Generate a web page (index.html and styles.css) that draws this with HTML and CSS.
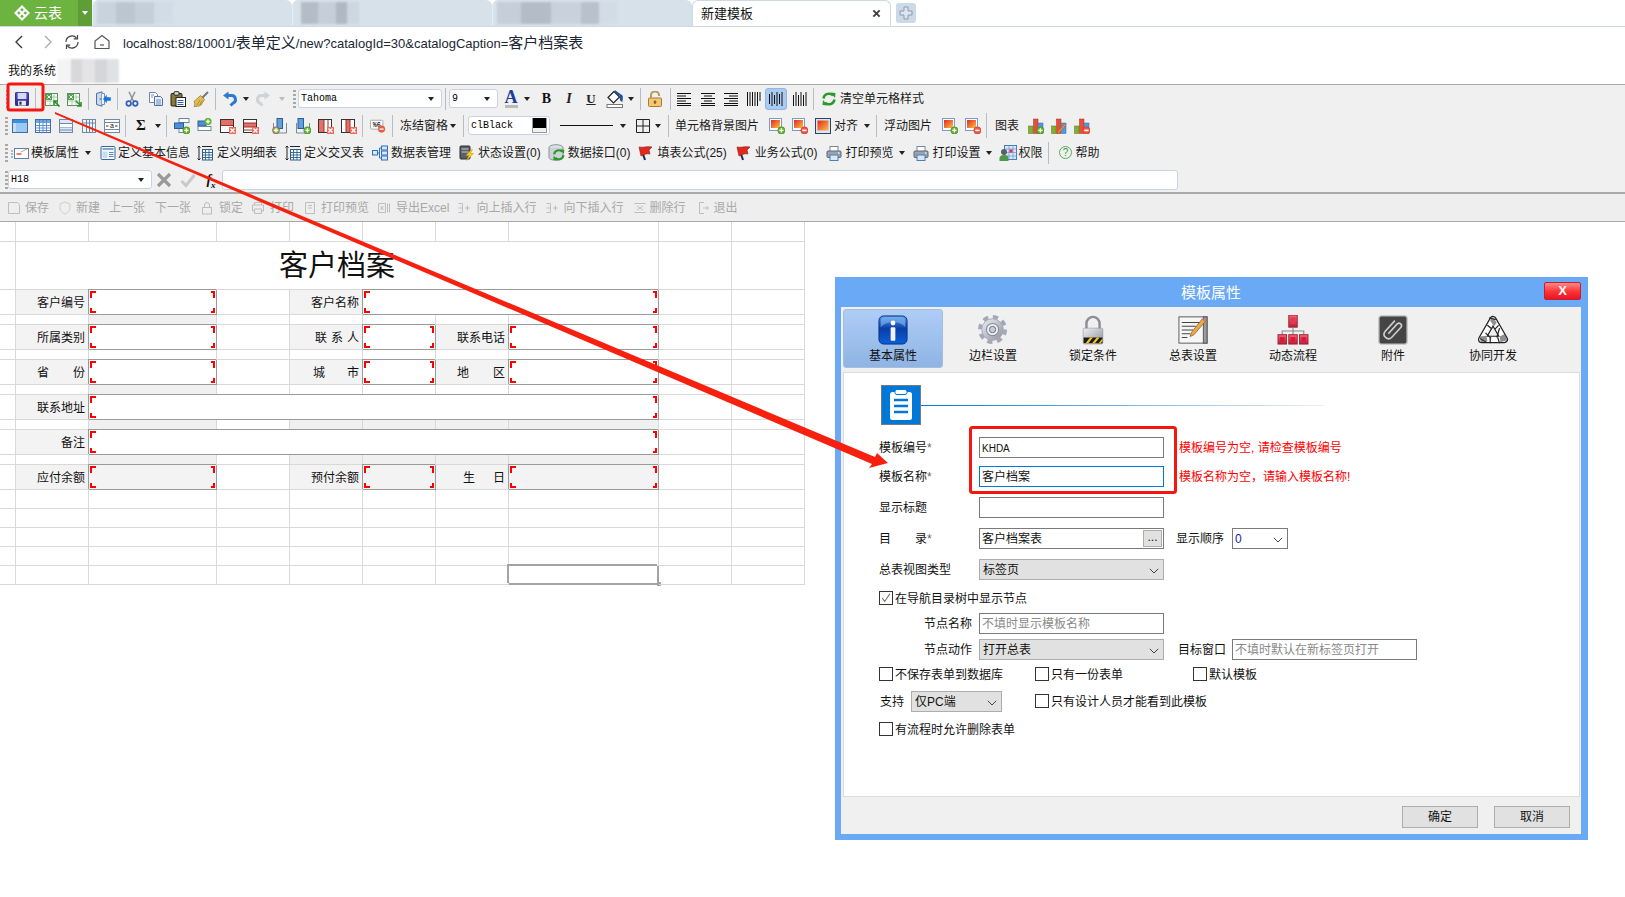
FILE: index.html
```html
<!DOCTYPE html>
<html lang="zh-CN">
<head>
<meta charset="utf-8">
<title>新建模板</title>
<link rel="stylesheet" href="styles.css">
</head>
<body>
<svg class="defs" aria-hidden="true">
<defs>
<linearGradient id="gsave" x1="0" y1="0" x2="0" y2="1"><stop offset="0" stop-color="#4a4fd0"/><stop offset="1" stop-color="#2a2a90"/></linearGradient>
<linearGradient id="gimg" x1="0" y1="0" x2="1" y2="1"><stop offset="0" stop-color="#e5281e"/><stop offset="1" stop-color="#fbc04a"/></linearGradient>
<linearGradient id="ginfo" x1="0" y1="0" x2="0" y2="1"><stop offset="0" stop-color="#4f9be8"/><stop offset=".45" stop-color="#0a3fa8"/><stop offset="1" stop-color="#0a5fd8"/></linearGradient>
<linearGradient id="gsilver" x1="0" y1="0" x2="1" y2="1"><stop offset="0" stop-color="#eef0f4"/><stop offset="1" stop-color="#8d9098"/></linearGradient>
<linearGradient id="gred" x1="0" y1="0" x2="0" y2="1"><stop offset="0" stop-color="#ee6a7c"/><stop offset="1" stop-color="#b8203a"/></linearGradient>
<g id="plus"><circle cx="12.4" cy="12.4" r="3.6" fill="#62b52e" stroke="#3f8a1a" stroke-width=".6"/><path d="M10.3 12.4h4.2M12.4 10.3v4.2" stroke="#fff" stroke-width="1.4"/></g>
<g id="minus"><circle cx="12.4" cy="12.4" r="3.6" fill="#ee5a44" stroke="#c53a26" stroke-width=".6"/><path d="M10.3 12.4h4.2" stroke="#fff" stroke-width="1.5"/></g>
<g id="xm"><rect x="9" y="9" width="7" height="7" fill="#ee6a5a"/><path d="M10.5 10.5l4 4M14.5 10.5l-4 4" stroke="#fff" stroke-width="1.4"/></g>
<g id="imgb"><rect x=".5" y=".5" width="12" height="12" fill="#fff" stroke="#7d9ccb"/><rect x="2" y="2" width="9" height="8" fill="url(#gimg)"/></g>
<g id="bars"><rect x=".5" y="8" width="4.5" height="7.5" fill="#7fb22e" stroke="#4f7a16" stroke-width=".5"/><rect x="5.5" y="1" width="4.5" height="14.5" fill="#e5503c" stroke="#a82c1c" stroke-width=".5"/><rect x="10.5" y="5" width="4.5" height="10.5" fill="#4c9be0" stroke="#2a6aa8" stroke-width=".5"/></g>
<g id="sheet"><rect x="1.5" y="2.5" width="12" height="12" fill="#fff" stroke="#5f8f5f"/><path d="M1.5 6h12M1.5 10h12M6 2.5v12M10 2.5v12" stroke="#8fbf8f" stroke-width=".8"/><rect x="2" y="3" width="6" height="6" fill="#4ea24e"/><path d="M3.3 4.3l3.4 3.4M6.7 4.3l-3.4 3.4" stroke="#fff"/></g>
<g id="flagg"><path d="M3 3l4 12" stroke="#1c2a50" stroke-width="2"/><path d="M1 2c4 1 7-1 13 0l-3 3 1 4c-4-1-6 1-9 2z" fill="#e0291c" stroke="#8c1a10" stroke-width=".6"/></g>
<g id="prng"><rect x="4" y="1.5" width="8" height="5" fill="#fff" stroke="#7c8794"/><rect x="1" y="6" width="14" height="6.5" rx="1" fill="#9aa4ae" stroke="#5f6974"/><rect x="4" y="10" width="8" height="5.5" fill="#d8e8fa" stroke="#4c7fb8"/><circle cx="12.8" cy="8" r=".8" fill="#fff"/></g>
<g id="rc"><path d="M2.5 7.5A5.5 5.5 0 0 1 12 4.5" fill="none" stroke="#2a9a2a" stroke-width="2.4"/><path d="M9.5 1.5l5 .5-.5 5z" fill="#2a9a2a"/><path d="M13.5 8.5A5.5 5.5 0 0 1 4 11.5" fill="none" stroke="#2a9a2a" stroke-width="2.4"/><path d="M6.5 14.5l-5-.5.5-5z" fill="#2a9a2a"/></g>
<symbol id="save" viewBox="0 0 16 16"><rect x=".5" y=".5" width="15" height="15" rx="1" fill="url(#gsave)" stroke="#20206a"/><rect x="3" y="1" width="10" height="7" fill="#d6d9f4"/><rect x="3.5" y="10" width="9" height="5.5" fill="#e6e8f6"/><rect x="5" y="11" width="2.5" height="3.5" fill="#333"/></symbol>
<symbol id="xlin" viewBox="0 0 16 16"><use href="#sheet"/><path d="M15.5 15.5l-5-5M10 14v-4h4" stroke="#2f8f2f" stroke-width="1.6" fill="none"/></symbol>
<symbol id="xlout" viewBox="0 0 16 16"><use href="#sheet"/><path d="M10 10l5 5M15 11v4h-4" stroke="#2f8f2f" stroke-width="1.6" fill="none"/></symbol>
<symbol id="door" viewBox="0 0 16 16"><path d="M1.5 2.5L7 .8v14.4l-5.5-1.7z" fill="#c9daf0" stroke="#4e6f9f"/><path d="M7 2.5h2.500v11H7" fill="#eef3fa" stroke="#6e8fbf"/><circle cx="5.3" cy="8" r=".8" fill="#3c5c8c"/><path d="M15.8 6.300h-4V3.800L8 8l3.800 4.200V9.700h4z" fill="#1477e0"/></symbol>
<symbol id="cut" viewBox="0 0 16 16"><path d="M5 .8l4.500 9.500M11 .8L6.500 10.300" stroke="#8c93a0" stroke-width="1.500"/><circle cx="4.700" cy="12.500" r="2.300" fill="none" stroke="#2f5fb8" stroke-width="1.700"/><circle cx="11.300" cy="12.500" r="2.300" fill="none" stroke="#2f5fb8" stroke-width="1.700"/></symbol>
<symbol id="copy" viewBox="0 0 16 16"><path d="M1.500 1.500h6l2 2v8h-8z" fill="#fff" stroke="#6f86b0"/><path d="M6.500 5.500h6l2 2v7h-8z" fill="#e8f0fb" stroke="#4e6fa8"/><path d="M8 9h5M8 11h5M8 13h5M3 4h3M3 6h2" stroke="#4e6fa8" stroke-width=".8"/></symbol>
<symbol id="paste" viewBox="0 0 16 16"><rect x="1" y="2.500" width="11" height="12.500" rx="1" fill="#8a7a34" stroke="#222"/><rect x="4" y=".7" width="5" height="3.500" rx="1" fill="#ddd" stroke="#222"/><rect x="6" y="6.500" width="9.500" height="9" fill="#fff" stroke="#222"/><path d="M7.500 9.500h6M7.500 11.500h6M7.500 13.500h6" stroke="#2f5fb8"/></symbol>
<symbol id="brush" viewBox="0 0 16 16"><path d="M15 1L9 7" stroke="#6f7780" stroke-width="2"/><path d="M7.500 4.500l4 4-3.500 5.500c-2 1.500-5 1.500-7 1.500 1-1 .7-2 .8-3.500L1 10.500z" fill="#e0bd5a" stroke="#9a7b26" stroke-width=".8"/><path d="M4 14l3-5M6.500 14.500l2.500-5" stroke="#9a7b26" stroke-width=".7"/></symbol>
<symbol id="undo" viewBox="0 0 16 16"><path d="M5 4.500h4.500a4 4 0 0 1 1.500 7.700L8.500 14.500" fill="none" stroke="#2f78d0" stroke-width="3"/><path d="M6.500 .5v8L1 4.500z" fill="#2f78d0"/></symbol>
<symbol id="redo" viewBox="0 0 16 16"><path d="M11 4.500H6.500a4 4 0 0 0-1.500 7.700l2.500 2.300" fill="none" stroke="#cfd3d8" stroke-width="3"/><path d="M9.500 .5v8L15 4.500z" fill="#cfd3d8"/></symbol>
<symbol id="fill" viewBox="0 0 18 18"><rect x="1" y="14.500" width="15.500" height="3" fill="#fff" stroke="#777"/><path d="M8 1.500l-6 6 5.500 5.500 6-6z" fill="#fff" stroke="#222" stroke-width="1.200"/><path d="M8.500 1l7 5v4" fill="none" stroke="#1c4fa0" stroke-width="2"/><path d="M13 6l3.500 0 0 6-2-1z" fill="#1c4fa0"/></symbol>
<symbol id="lockopen" viewBox="0 0 16 16"><rect x="1.500" y="7" width="13" height="8.500" rx="1" fill="#f0c878" stroke="#b0782a"/><path d="M4 7V4a4 3.500 0 0 1 8 0v1" fill="none" stroke="#b89a5a" stroke-width="2"/><path d="M8 9.500v3.500M6.500 11h3" stroke="#704a14" stroke-width="1.200"/></symbol>
<symbol id="al" viewBox="0 0 16 16"><path d="M1 2.500h14M1 5h9M1 7.500h14M1 10h9M1 12.500h14M1 14.500h14" stroke="#111"/></symbol>
<symbol id="ac" viewBox="0 0 16 16"><path d="M1 2.500h14M4 5h8M1 7.500h14M4 10h8M1 12.500h14M1 14.500h14" stroke="#111"/></symbol>
<symbol id="ar" viewBox="0 0 16 16"><path d="M1 2.500h14M6 5h9M1 7.500h14M6 10h9M1 12.500h14M1 14.500h14" stroke="#111"/></symbol>
<symbol id="vb1" viewBox="0 0 16 16"><path d="M1.500 1v14M4 1v14M6.500 1v14M9 1v14M11.500 1v14M14 1v9" stroke="#111"/></symbol>
<symbol id="vb2" viewBox="0 0 16 16"><path d="M1.500 3v10M4 1v14M6.500 4v9M9 1v14M11.500 3v10M14 1v14" stroke="#111"/></symbol>
<symbol id="vb3" viewBox="0 0 16 16"><path d="M1.500 4v11M4 1v14M6.500 4v11M9 1v14M11.500 4v11M14 1v14" stroke="#111"/></symbol>
<symbol id="tb1" viewBox="0 0 16 16"><rect x=".5" y="1.500" width="15" height="13" fill="#9cc8f4" stroke="#3f6fa8"/><rect x="1" y="2" width="14" height="3" fill="#3f8fe0"/><rect x="1" y="5" width="3" height="9" fill="#bfe0fa"/></symbol>
<symbol id="tb2" viewBox="0 0 16 16"><rect x=".5" y="1.500" width="15" height="13" fill="#fff" stroke="#3f6fa8"/><rect x="1" y="2" width="14" height="3" fill="#6fa8e0"/><path d="M1 7.500h14M1 10h14M1 12.500h14M4.500 2v12M8 2v12M11.500 2v12" stroke="#3f7fc8" stroke-width=".8"/></symbol>
<symbol id="tb3" viewBox="0 0 16 16"><rect x="1.500" y="1.500" width="13" height="13" fill="#dce8f6" stroke="#6f8aa8"/><path d="M2 5.500h12M2 9h12M2 12h12" stroke="#6f8aa8"/><path d="M2 6h12v3H2z" fill="#fff"/></symbol>
<symbol id="tb4" viewBox="0 0 16 16"><rect x="1.500" y="1.500" width="13" height="13" fill="#eef3f9" stroke="#6f8aa8"/><path d="M5.500 2v12M8.500 2v12M11.500 2v12M2 5h12" stroke="#6f8aa8"/></symbol>
<symbol id="tb5" viewBox="0 0 16 16"><rect x=".5" y="1.500" width="15" height="13" fill="#fff" stroke="#6f8aa8"/><path d="M1 4.500h14M1 11.500h14" stroke="#6f8aa8"/><path d="M2 8h2.500M13.500 8H11" stroke="#333"/><text x="8" y="10.300" text-anchor="middle" font-size="7" font-family="Liberation Sans" fill="#111">a</text></symbol>
<symbol id="ins1" viewBox="0 0 16 16"><rect x="5" y=".5" width="10" height="4" fill="#fff" stroke="#6f8aa8"/><rect x="5" y="10.500" width="7" height="4" fill="#fff" stroke="#6f8aa8"/><rect x=".5" y="5" width="9" height="5.500" fill="#4c8fd8" stroke="#2a5f9f"/><use href="#plus"/></symbol>
<symbol id="ins2" viewBox="0 0 16 16"><rect x="1" y="3" width="8" height="5" fill="#4c8fd8" stroke="#2a5f9f"/><rect x="1" y="8.500" width="13" height="4" fill="#fff" stroke="#6f8aa8"/><g transform="translate(-3,-7.500)"><circle cx="14" cy="11" r="3.600" fill="#62b52e"/><path d="M12 11h4M14 9v4" stroke="#fff" stroke-width="1.400"/></g></symbol>
<symbol id="del1" viewBox="0 0 16 16"><rect x=".5" y="1.500" width="13" height="13" fill="#fff" stroke="#333"/><rect x="1" y="2" width="12" height="5" fill="#e07068"/><path d="M1 7.500h12" stroke="#a03028"/><use href="#xm"/></symbol>
<symbol id="del2" viewBox="0 0 16 16"><rect x=".5" y="1.500" width="13" height="13" fill="#fff" stroke="#333"/><rect x="1" y="5" width="12" height="4" fill="#e07068"/><path d="M1 5h12M1 9h12M1 12h12" stroke="#a03028"/><use href="#xm"/></symbol>
<symbol id="insc1" viewBox="0 0 16 16"><rect x="5" y=".5" width="5.500" height="10" fill="#5f9fe0" stroke="#2a5f9f"/><path d="M1.500 5v10h13V5" fill="none" stroke="#7d8a9a"/><circle cx="4" cy="12.300" r="3.500" fill="#8cc63f" stroke="#a020a0" stroke-width=".6"/><path d="M2 12.300h4M4 10.300v4" stroke="#fff" stroke-width="1.300"/></symbol>
<symbol id="insc2" viewBox="0 0 16 16"><rect x="3" y=".5" width="5.500" height="10" fill="#5f9fe0" stroke="#2a5f9f"/><path d="M1.500 5v10h13V5" fill="none" stroke="#7d8a9a"/><use href="#plus"/></symbol>
<symbol id="delc1" viewBox="0 0 16 16"><rect x=".5" y="1.500" width="13" height="13" fill="#fff" stroke="#333"/><rect x="1" y="2" width="5" height="12" fill="#e07068"/><path d="M6 2v12M10 2v12" stroke="#a03028"/><use href="#xm"/></symbol>
<symbol id="delc2" viewBox="0 0 16 16"><rect x=".5" y="1.500" width="13" height="13" fill="#fff" stroke="#333"/><rect x="5" y="2" width="4" height="12" fill="#e07068"/><path d="M5 2v12M9 2v12" stroke="#a03028"/><use href="#xm"/></symbol>
<symbol id="pct" viewBox="0 0 18 16"><rect x=".5" y="1.500" width="14" height="10" rx="1" fill="#fff" stroke="#9aa4ae"/><text x="7.500" y="9.300" text-anchor="middle" font-size="7.500" font-weight="700" font-family="Liberation Mono" fill="#222">%6</text><circle cx="13" cy="11.500" r="4" fill="#ee5a44"/><path d="M10.700 11.500h4.600" stroke="#fff" stroke-width="1.500"/></symbol>
<symbol id="cells" viewBox="0 0 14 14"><path d="M.5.500h13v13H.5zM7 .5v13M.5 7h13" fill="none" stroke="#222"/></symbol>
<symbol id="imgp" viewBox="0 0 16 16"><use href="#imgb"/><use href="#plus"/></symbol>
<symbol id="imgm" viewBox="0 0 16 16"><use href="#imgb"/><use href="#minus"/></symbol>
<symbol id="imgf" viewBox="0 0 16 16"><rect x=".5" y=".5" width="15" height="15" fill="#dbe4f0" stroke="#26466f"/><rect x="2.500" y="2.500" width="11" height="10" fill="url(#gimg)"/></symbol>
<symbol id="chp" viewBox="0 0 16 16"><use href="#bars"/><use href="#plus"/></symbol>
<symbol id="chm" viewBox="0 0 16 16"><use href="#bars"/><use href="#minus"/></symbol>
<symbol id="che" viewBox="0 0 16 16"><use href="#bars"/><path d="M15 7l-7 8-2 .8.800-2 7-8z" fill="#f0a040" stroke="#a05a10" stroke-width=".6"/><path d="M13.800 5.800l1.200 1.200" stroke="#e85a9a" stroke-width="1.600"/></symbol>
<symbol id="card" viewBox="0 0 18 16"><path d="M0 6h2M0 9h2M0 12h2" stroke="#5a7fb0"/><rect x="3.500" y="3.500" width="14" height="10" fill="#fff" stroke="#5a7fb0"/><path d="M5.500 9h5" stroke="#d83a2a" stroke-width="1.300"/><path d="M10 7l6-3" stroke="#c8a060"/></symbol>
<symbol id="form" viewBox="0 0 16 16"><rect x="1" y="1.500" width="14" height="13" rx="1" fill="#f6f9fd" stroke="#34689f"/><rect x="2.500" y="3" width="11" height="2" fill="#7fa8d4"/><rect x="2.500" y="6.500" width="5" height="6.500" fill="#c8daee"/><path d="M9 7.500h4.500M9 9.500h4.500M9 11.500h4.500" stroke="#34689f" stroke-width=".8"/></symbol>
<symbol id="dtl" viewBox="0 0 16 16"><path d="M2 1v14M.5 2.500L2 1l1.500 1.500M.5 13.500L2 15l1.500-1.500" fill="none" stroke="#222"/><path d="M5 1.500h10" stroke="#222"/><rect x="5.500" y="4.500" width="10" height="10.500" fill="#fff" stroke="#2a5f90"/><path d="M5.500 7.500h10M5.500 10h10M5.500 12.500h10M8.500 4.500V15M12 4.500V15" stroke="#2a5f90" stroke-width=".9"/></symbol>
<symbol id="dbt" viewBox="0 0 16 16"><rect x=".5" y="5.500" width="5" height="4.500" fill="#d8e8fa" stroke="#2f6fc0"/><rect x="9.500" y="1" width="6" height="4" fill="#d8e8fa" stroke="#2f6fc0"/><rect x="9.500" y="6" width="6" height="4" fill="#d8e8fa" stroke="#2f6fc0"/><rect x="9.500" y="11" width="6" height="4" fill="#d8e8fa" stroke="#2f6fc0"/><path d="M5.500 8h2M7.500 3v10h2M7.500 3h2" fill="none" stroke="#2f6fc0"/></symbol>
<symbol id="stat" viewBox="0 0 16 16"><rect x="1" y="1" width="10" height="13" rx="1" fill="#5a5f66" stroke="#2a2d33"/><path d="M2.500 4h7M2.500 7h7" stroke="#c8ccd2"/><path d="M12.500 4.500L7 10.500h3L7.500 15.500l7-7h-3.200l2.200-4z" fill="#f8d020" stroke="#c89a10" stroke-width=".5"/></symbol>
<symbol id="dbi" viewBox="0 0 18 18"><ellipse cx="8" cy="3.500" rx="7" ry="2.800" fill="#dfe3e8" stroke="#8a929c"/><path d="M1 3.500v10c0 1.600 3 2.800 7 2.800s7-1.200 7-2.800v-10" fill="#cdd2d8" stroke="#8a929c"/><g transform="translate(4,4) scale(.85)"><use href="#rc"/></g></symbol>
<symbol id="flag" viewBox="0 0 16 16"><use href="#flagg"/></symbol>
<symbol id="prn" viewBox="0 0 16 16"><use href="#prng"/></symbol>
<symbol id="auth" viewBox="0 0 18 18"><rect x="5.500" y="1.500" width="12" height="14" fill="#dbe8f8" stroke="#4a78b8"/><path d="M5.500 5h12M5.500 8.500h12M5.500 12h12M10 1.500v14M14 1.500v14" stroke="#6f9ad8" stroke-width=".8"/><rect x="10.500" y="5.500" width="3" height="3" fill="#e03a2a"/><circle cx="5" cy="8" r="3" fill="#5a6068"/><path d="M.5 17v-3c0-2 2-3 4.500-3s4.500 1 4.500 3v3z" fill="#4a9a4a"/></symbol>
<symbol id="rcs" viewBox="0 0 16 16"><use href="#rc"/></symbol>
<symbol id="xg" viewBox="0 0 16 16"><path d="M2 2l12 12M14 2L2 14" stroke="#9a9a9a" stroke-width="3.200"/></symbol>
<symbol id="vg" viewBox="0 0 16 16"><path d="M1.500 9l4.500 4.500L14.500 3" fill="none" stroke="#c8c8c8" stroke-width="3"/></symbol>
<symbol id="g-save" viewBox="0 0 14 14"><path d="M1.500 1.500h9l2 2v9h-11z" fill="none" stroke="#bdbdbd"/></symbol>
<symbol id="g-new" viewBox="0 0 14 14"><path d="M7 1l5 2v4c0 3-2.500 5-5 6-2.500-1-5-3-5-6V3z" fill="none" stroke="#cfcfcf"/></symbol>
<symbol id="g-lock" viewBox="0 0 14 14"><rect x="2.500" y="6.500" width="9" height="6.500" fill="none" stroke="#bdbdbd"/><path d="M4.500 6.500V4a2.500 2.500 0 0 1 5 0v2.500" fill="none" stroke="#bdbdbd"/></symbol>
<symbol id="g-print" viewBox="0 0 14 14"><path d="M3.500 4V1.500h7V4M3.500 10H1.500V4h11v6h-2M3.500 8h7v4.500h-7z" fill="none" stroke="#bdbdbd"/></symbol>
<symbol id="g-prev" viewBox="0 0 14 14"><path d="M2.500 1.500h9v11h-9zM5 4.500h4M5 7h4" fill="none" stroke="#bdbdbd"/></symbol>
<symbol id="g-xl" viewBox="0 0 14 14"><path d="M1.500 2.500h7v9h-7zM10.500 2.500v9M12.500 2.500v9M3.500 5l3 4M6.500 5l-3 4" fill="none" stroke="#bdbdbd"/></symbol>
<symbol id="g-up" viewBox="0 0 14 14"><path d="M1.500 2.500h4M1.500 7h4M1.500 11.500h4M5.500 2.500v9M8 7h5M10.500 4.500v5" fill="none" stroke="#bdbdbd"/></symbol>
<symbol id="g-del" viewBox="0 0 14 14"><path d="M1.500 2.500h11M1.500 11.500h11M4 5l6 4M10 5L4 9" fill="none" stroke="#bdbdbd"/></symbol>
<symbol id="g-exit" viewBox="0 0 14 14"><path d="M8 1.500H3.500v11H8M7 7h5M10.500 5l2 2-2 2" fill="none" stroke="#bdbdbd"/></symbol>
<symbol id="chev" viewBox="0 0 10 6"><path d="M.8.8L5 5 9.200.8" fill="none" stroke="#444" stroke-width="1"/></symbol>
<symbol id="d-info" viewBox="0 0 32 32"><rect x="1" y="1" width="30" height="30" rx="5" fill="url(#ginfo)" stroke="#0a2f80"/><path d="M3 13C8 6 24 6 29 13V6a4 4 0 0 0-4-4H7a4 4 0 0 0-4 4z" fill="#8fc0f4" opacity=".55"/><circle cx="16" cy="8.500" r="2.600" fill="#fff"/><rect x="13.500" y="13" width="5" height="14.500" rx="1" fill="#f2f2f6"/></symbol>
<symbol id="d-gear" viewBox="0 0 32 32"><circle cx="15.500" cy="15.500" r="13" fill="none" stroke="#a4a6bc" stroke-width="5" stroke-dasharray="5.400 4.800"/><circle cx="15.500" cy="15.500" r="11.500" fill="url(#gsilver)" stroke="#a8aabc"/><circle cx="15.500" cy="15.500" r="6.500" fill="#eef0f6" stroke="#8a8c9c" stroke-width="1.200"/><circle cx="15.500" cy="15.500" r="3.400" fill="#c8cad4" stroke="#6a6c7c"/></symbol>
<symbol id="d-lock" viewBox="0 0 32 32"><path d="M9 15V9a7 7 0 0 1 14 0v6" fill="none" stroke="#8c8e94" stroke-width="2.600"/><rect x="5.500" y="14" width="21" height="17" rx="1.500" fill="url(#gsilver)" stroke="#8c8e94" stroke-width=".6"/><path d="M6 24h20v6H6z" fill="#1a1a1a"/><path d="M8 30l5-6h3l-5 6zM15 30l5-6h3l-5 6zM22 30l4-5v3l-2 2z" fill="#f2c81e"/></symbol>
<symbol id="d-note" viewBox="0 0 32 32"><rect x="1" y="2" width="30" height="28" fill="#f6f6f6" stroke="#555"/><rect x="27" y="2" width="4" height="28" fill="#9a9a9a" stroke="#555"/><path d="M4 8h20M4 12h15M4 16h12M4 20h9M4 24h6" stroke="#444" stroke-width="1.200"/><path d="M26 4l3 3-12 14-4 2 1-4z" fill="#f0a848" stroke="#8a5a20" stroke-width=".8"/><path d="M26 4l3 3 1-3z" fill="#e86a9a"/></symbol>
<symbol id="d-tree" viewBox="0 0 32 32"><rect x="11.500" y="0" width="9" height="13" fill="url(#gred)" stroke="#a02030"/><rect x="13.500" y="2.500" width="5" height="7" fill="#e83850"/><path d="M16 13v4M4.500 21v-4h23v4M16 17v4" fill="none" stroke="#8a8a8a" stroke-width="1.200"/><rect x="0" y="21" width="9" height="10" fill="url(#gred)" stroke="#a02030"/><rect x="11.500" y="21" width="9" height="10" fill="url(#gred)" stroke="#a02030"/><rect x="23" y="21" width="9" height="10" fill="url(#gred)" stroke="#a02030"/><rect x="2" y="23.500" width="5" height="5" fill="#e01838"/><rect x="13.500" y="23.500" width="5" height="5" fill="#e01838"/><rect x="25" y="23.500" width="5" height="5" fill="#e01838"/></symbol>
<symbol id="d-clip" viewBox="0 0 32 32"><rect x="1" y="1" width="30" height="30" rx="2.500" fill="#454545" stroke="#bdbdbd" stroke-width="1.400"/><path d="M11 21l9.500-10.500a2.700 2.700 0 0 1 4 3.600L14.500 25a4.800 4.800 0 0 1-7-6.500L18 7" transform="translate(0,-1)" fill="none" stroke="#cfcfcf" stroke-width="1.700"/></symbol>
<symbol id="d-hands" viewBox="0 0 32 32"><path d="M16 5L28 26H4z" fill="none" stroke="#222" stroke-width="8" stroke-linejoin="round"/><path d="M16 5L28 26H4z" fill="none" stroke="#fff" stroke-width="5.400" stroke-linejoin="round"/><path d="M12 3l7 2M8 19l6 6M23 14l-3 10M2 25l7 4M13 24v6M21 24l2 6M10 11l5 4M22 11l-4 4" stroke="#222" stroke-width="1.300"/><path d="M15 2l5 6-3 4-4-6zM2 23l7-1 1 6-7 1zM23 23l6-3 2 7-7 2z" fill="#444" opacity=".6"/></symbol>
</defs>
</svg>

<header class="tabbar">
  <div class="logo"><svg class="logo-ic" viewBox="0 0 16 16"><path d="M8 0l8 8-8 8-8-8z" fill="#fff"/><path d="M8 3l1.800 1.800L8 6.600 6.200 4.800zM3 8l1.800-1.800L6.600 8 4.800 9.800zM13 8l-1.800 1.800L9.400 8l1.800-1.800zM8 13l-1.800-1.800L8 9.400l1.800 1.800z" fill="#6db33f"/></svg><span>云表</span></div>
  <div class="logo-drop"><i class="caret white"></i></div>
  <div class="tab"><i class="blur b1"></i></div>
  <div class="tab"><i class="blur b2"></i></div>
  <div class="tab"><i class="blur b3"></i></div>
  <div class="tab active"><span>新建模板</span><svg class="tab-x" viewBox="0 0 10 10"><path d="M1.500 1.500l7 7M8.500 1.500l-7 7" stroke="#444" stroke-width="2.200"/></svg></div>
  <div class="newtab"><svg viewBox="0 0 14 14"><path d="M5 1h4v4h4v4H9v4H5V9H1V5h4z" fill="#dde6f0" stroke="#8b9bb0"/></svg></div>
</header>

<nav class="urlbar">
  <svg class="nav-ic back" viewBox="0 0 16 16"><path d="M11 2L5 8l6 6" fill="none" stroke="#333" stroke-width="1.300"/></svg>
  <svg class="nav-ic fwd" viewBox="0 0 16 16"><path d="M5 2l6 6-6 6" fill="none" stroke="#aaa" stroke-width="1.300"/></svg>
  <svg class="nav-ic reload" viewBox="0 0 16 16"><path d="M2 8a6 6 0 0 1 10.500-4M14 8A6 6 0 0 1 3.500 12" fill="none" stroke="#444" stroke-width="1.200"/><path d="M13.500 1v3.800H9.700M2.500 15v-3.800h3.800" fill="none" stroke="#444" stroke-width="1.200"/></svg>
  <svg class="nav-ic home" viewBox="0 0 16 16"><path d="M8 1.500L15 7v7.500H1V7z" fill="none" stroke="#555" stroke-width="1.200"/><path d="M6 11h4" stroke="#555" stroke-width="1.200"/></svg>
  <span class="url">localhost:88/10001/<span class="cjk">表单定义</span>/new?catalogId=30&amp;catalogCaption=<span class="cjk">客户档案表</span></span>
</nav>
<div class="bookmarks"><span>我的系统</span><i class="blur b4"></i></div>

<section class="tools">
  <div class="row r1">
    <span class="t w14"><i class="grip"></i></span>
    <span class="t w15"><svg class="ic14"><use href="#save"/></svg></span>
    <span class="t w13"><i class="sl"></i></span>
    <span class="t w20"><svg class="ic"><use href="#xlin"/></svg></span>
    <span class="t w24"><svg class="ic"><use href="#xlout"/></svg></span>
    <span class="t w4"><i class="sl"></i></span>
    <span class="t w26"><svg class="ic"><use href="#door"/></svg></span>
    <span class="t w2"><i class="sl"></i></span>
    <span class="t w27"><svg class="ic"><use href="#cut"/></svg></span>
    <span class="t w21"><svg class="ic"><use href="#copy"/></svg></span>
    <span class="t w23"><svg class="ic"><use href="#paste"/></svg></span>
    <span class="t w24"><svg class="ic"><use href="#brush"/></svg></span>
    <span class="t w4"><i class="sl"></i></span>
    <span class="t w26"><svg class="ic"><use href="#undo"/></svg></span>
    <span class="t w6"><i class="caret"></i></span>
    <span class="t w28"><svg class="ic"><use href="#redo"/></svg></span>
    <span class="t w9"><i class="caret off"></i></span>
    <span class="t w4"></span>
    <span class="t w8"><i class="grip"></i></span>
    <div class="combo w144"><span>Tahoma</span><i class="caret"></i></div>
    <span class="t w7"><i class="sl"></i></span>
    <div class="combo w49"><span>9</span><i class="caret"></i></div>
    <span class="t w26 fa"><b>A</b></span>
    <span class="t w6"><i class="caret"></i></span>
    <span class="t w33 fb"><b>B</b></span>
    <span class="t w12 fi"><b>I</b></span>
    <span class="t w32 fu"><b>U</b></span>
    <span class="t w16"><svg class="ic18"><use href="#fill"/></svg></span>
    <span class="t w16"><i class="caret"></i></span>
    <span class="t w2"><i class="sl"></i></span>
    <span class="t w28"><svg class="ic"><use href="#lockopen"/></svg></span>
    <span class="t w2"><i class="sl"></i></span>
    <span class="t w26"><svg class="ic"><use href="#al"/></svg></span>
    <span class="t w22"><svg class="ic"><use href="#ac"/></svg></span>
    <span class="t w24"><svg class="ic"><use href="#ar"/></svg></span>
    <span class="t w22"><svg class="ic"><use href="#vb1"/></svg></span>
    <span class="t w22 on"><svg class="ic"><use href="#vb2"/></svg></span>
    <span class="t w25"><svg class="ic"><use href="#vb3"/></svg></span>
    <span class="t w2"><i class="sl"></i></span>
    <span class="t w4"></span>
    <span class="t w22"><svg class="ic"><use href="#rcs"/></svg></span>
    <span class="lbl">清空单元格样式</span>
  </div>
  <div class="row r2 pad5">
    <i class="grip"></i>
    <span class="t w23"><svg class="ic"><use href="#tb1"/></svg></span>
    <span class="t w23"><svg class="ic"><use href="#tb2"/></svg></span>
    <span class="t w23"><svg class="ic"><use href="#tb3"/></svg></span>
    <span class="t w23"><svg class="ic"><use href="#tb4"/></svg></span>
    <span class="t w23"><svg class="ic"><use href="#tb5"/></svg></span>
    <span class="t w5"><i class="sl"></i></span>
    <span class="t w26 sig">Σ</span>
    <span class="t w8"><i class="caret"></i></span>
    <span class="t w9"><i class="sl"></i></span>
    <span class="t w22"><svg class="ic"><use href="#ins1"/></svg></span>
    <span class="t w24"><svg class="ic"><use href="#ins2"/></svg></span>
    <span class="t w22"><svg class="ic"><use href="#del1"/></svg></span>
    <span class="t w24"><svg class="ic"><use href="#del2"/></svg></span>
    <span class="t w34"><svg class="ic"><use href="#insc1"/></svg></span>
    <span class="t w12"><svg class="ic"><use href="#insc2"/></svg></span>
    <span class="t w34"><svg class="ic"><use href="#delc1"/></svg></span>
    <span class="t w12"><svg class="ic"><use href="#delc2"/></svg></span>
    <span class="t w14"><i class="sl"></i></span>
    <span class="t w18"><svg class="ic"><use href="#pct"/></svg></span>
    <span class="t w10"><i class="sl"></i></span>
    <span class="t w3"></span>
    <span class="lbl">冻结窗格</span>
    <span class="t w10"><i class="caret"></i></span>
    <span class="t w10"><i class="sl"></i></span>
    <div class="combo w82"><span>clBlack</span><i class="swatch"></i></div>
    <span class="t w10"></span>
    <span class="t w53"><i class="hline"></i></span>
    <span class="t w20"><i class="caret"></i></span>
    <span class="t w20"><svg class="ic14"><use href="#cells"/></svg></span>
    <span class="t w10"><i class="caret"></i></span>
    <span class="t w10"><i class="sl"></i></span>
    <span class="t w2"></span>
    <span class="lbl">单元格背景图片</span>
    <span class="t w35"><svg class="ic"><use href="#imgp"/></svg></span>
    <span class="t w12"><svg class="ic"><use href="#imgm"/></svg></span>
    <span class="t w6"></span>
    <span class="t w22"><svg class="ic"><use href="#imgf"/></svg></span>
    <span class="lbl">对齐</span>
    <span class="t w17"><i class="caret"></i></span>
    <span class="t w2"><i class="sl"></i></span>
    <span class="t w7"></span>
    <span class="lbl">浮动图片</span>
    <span class="t w36"><svg class="ic"><use href="#imgp"/></svg></span>
    <span class="t w10"><svg class="ic"><use href="#imgm"/></svg></span>
    <span class="t w17"><i class="sl tall"></i></span>
    <span class="lbl">图表</span>
    <span class="t w34"><svg class="ic"><use href="#chp"/></svg></span>
    <span class="t w12"><svg class="ic"><use href="#che"/></svg></span>
    <span class="t w34"><svg class="ic"><use href="#chm"/></svg></span>
  </div>
  <div class="row r3 pad5">
    <i class="grip"></i>
    <span class="t w23"><svg class="ic18"><use href="#card"/></svg></span>
    <span class="lbl">模板属性</span>
    <span class="t w18"><i class="caret"></i></span>
    <span class="t w21"><svg class="ic"><use href="#form"/></svg></span>
    <span class="lbl">定义基本信息</span>
    <span class="t w3"></span>
    <span class="t w24"><svg class="ic"><use href="#dtl"/></svg></span>
    <span class="lbl">定义明细表</span>
    <span class="t w4"></span>
    <span class="t w23"><svg class="ic"><use href="#dtl"/></svg></span>
    <span class="lbl">定义交叉表</span>
    <span class="t w4"></span>
    <span class="t w23"><svg class="ic"><use href="#dbt"/></svg></span>
    <span class="lbl">数据表管理</span>
    <span class="t w4"></span>
    <span class="t w23"><svg class="ic"><use href="#stat"/></svg></span>
    <span class="lbl">状态设置(0)</span>
    <span class="t w5"></span>
    <span class="t w22"><svg class="ic18"><use href="#dbi"/></svg></span>
    <span class="lbl">数据接口(0)</span>
    <span class="t w5"></span>
    <span class="t w22"><svg class="ic"><use href="#flag"/></svg></span>
    <span class="lbl">填表公式(25)</span>
    <span class="t w6"></span>
    <span class="t w22"><svg class="ic"><use href="#flag"/></svg></span>
    <span class="lbl">业务公式(0)</span>
    <span class="t w6"></span>
    <span class="t w22"><svg class="ic"><use href="#prn"/></svg></span>
    <span class="lbl">打印预览</span>
    <span class="t w17"><i class="caret"></i></span>
    <span class="t w22"><svg class="ic"><use href="#prn"/></svg></span>
    <span class="lbl">打印设置</span>
    <span class="t w17"><i class="caret"></i></span>
    <span class="t w21"><svg class="ic18"><use href="#auth"/></svg></span>
    <span class="lbl">权限</span>
    <span class="t w13"><i class="sl"></i></span>
    <span class="t w20 help"><i>?</i></span>
    <span class="lbl">帮助</span>
  </div>
  <div class="row r4 pad5">
    <i class="grip"></i>
    <div class="combo w144"><span>H18</span><i class="caret"></i></div>
    <span class="t w24"><svg class="ic"><use href="#xg"/></svg></span>
    <span class="t w24"><svg class="ic"><use href="#vg"/></svg></span>
    <span class="t w22 fx"><span>f<sub>x</sub></span></span>
    <div class="formula"></div>
  </div>
</section>

<section class="actions">
  <span class="t w15"><svg class="ic14"><use href="#g-save"/></svg></span><span class="t w4"></span><span class="lbl">保存</span>
  <span class="t w8"></span><span class="t w16"><svg class="ic14"><use href="#g-new"/></svg></span><span class="t w3"></span><span class="lbl">新建</span>
  <span class="t w9"></span><span class="lbl">上一张</span>
  <span class="t w10"></span><span class="lbl">下一张</span>
  <span class="t w8"></span><span class="t w16"><svg class="ic14"><use href="#g-lock"/></svg></span><span class="t w4"></span><span class="lbl">锁定</span>
  <span class="t w7"></span><span class="t w16"><svg class="ic14"><use href="#g-print"/></svg></span><span class="t w4"></span><span class="lbl">打印</span>
  <span class="t w8"></span><span class="t w16"><svg class="ic14"><use href="#g-prev"/></svg></span><span class="t w3"></span><span class="lbl">打印预览</span>
  <span class="t w7"></span><span class="t w16"><svg class="ic14"><use href="#g-xl"/></svg></span><span class="t w4"></span><span class="lbl">导出Excel</span>
  <span class="t w7"></span><span class="t w16"><svg class="ic14"><use href="#g-up"/></svg></span><span class="t w4"></span><span class="lbl">向上插入行</span>
  <span class="t w8"></span><span class="t w16"><svg class="ic14"><use href="#g-up"/></svg></span><span class="t w3"></span><span class="lbl">向下插入行</span>
  <span class="t w8"></span><span class="t w16"><svg class="ic14"><use href="#g-del"/></svg></span><span class="t w2"></span><span class="lbl">删除行</span>
  <span class="t w9"></span><span class="t w16"><svg class="ic14"><use href="#g-exit"/></svg></span><span class="t w3"></span><span class="lbl">退出</span>
</section>

<table class="sheet">
  <colgroup><col class="c16"><col class="c73"><col class="c128"><col class="c73"><col class="c73"><col class="c73"><col class="c73"><col class="c150"><col class="c73"><col class="c73"></colgroup>
  <tr class="h20"><td></td><td></td><td></td><td></td><td></td><td></td><td></td><td></td><td></td><td></td></tr>
  <tr class="h48"><td></td><td colspan="7" class="title">客户档案</td><td></td><td></td></tr>
  <tr class="h25"><td></td><td class="lab">客户编号</td><td class="fld"></td><td></td><td class="lab">客户名称</td><td class="fld" colspan="3"></td><td></td><td></td></tr>
  <tr class="h10"><td></td><td></td><td class="fill"></td><td></td><td></td><td></td><td></td><td></td><td></td><td></td></tr>
  <tr class="h25"><td></td><td class="lab">所属类别</td><td class="fld"></td><td></td><td class="lab">联&#8196;系&#8196;人</td><td class="fld"></td><td class="lab">联系电话</td><td class="fld"></td><td></td><td></td></tr>
  <tr class="h10"><td></td><td></td><td></td><td></td><td></td><td></td><td></td><td></td><td></td><td></td></tr>
  <tr class="h25"><td></td><td class="lab">省&emsp;&emsp;份</td><td class="fld"></td><td></td><td class="lab">城&emsp;&ensp;&#8196;市</td><td class="fld"></td><td class="lab">地&emsp;&emsp;区</td><td class="fld"></td><td></td><td></td></tr>
  <tr class="h10"><td></td><td></td><td class="fill"></td><td></td><td></td><td></td><td></td><td></td><td></td><td></td></tr>
  <tr class="h25"><td></td><td class="lab">联系地址</td><td class="fld" colspan="6"></td><td></td><td></td></tr>
  <tr class="h10"><td></td><td></td><td class="fill"></td><td></td><td class="fill"></td><td class="fill"></td><td class="fill"></td><td class="fill"></td><td></td><td></td></tr>
  <tr class="h25"><td></td><td class="lab">备注</td><td class="fld" colspan="6"></td><td></td><td></td></tr>
  <tr class="h10"><td></td><td></td><td class="fill"></td><td></td><td class="fill"></td><td class="fill"></td><td class="fill"></td><td class="fill"></td><td></td><td></td></tr>
  <tr class="h25"><td></td><td class="lab">应付余额</td><td class="fld ro"></td><td></td><td class="lab">预付余额</td><td class="fld ro"></td><td class="lab">生&emsp;&ensp;日</td><td class="fld ro"></td><td></td><td></td></tr>
  <tr class="h19"><td></td><td></td><td></td><td></td><td></td><td></td><td></td><td></td><td></td><td></td></tr>
  <tr class="h19"><td></td><td></td><td></td><td></td><td></td><td></td><td></td><td></td><td></td><td></td></tr>
  <tr class="h19"><td></td><td></td><td></td><td></td><td></td><td></td><td></td><td></td><td></td><td></td></tr>
  <tr class="h19"><td></td><td></td><td></td><td></td><td></td><td></td><td></td><td></td><td></td><td></td></tr>
  <tr class="h19"><td></td><td></td><td></td><td></td><td></td><td></td><td></td><td class="sel"><i class="handle"></i></td><td></td><td></td></tr>
</table>

<section class="dialog">
  <div class="dlg-title">模板属性</div>
  <div class="dlg-close">X</div>
  <div class="dlg-body">
    <div class="dlg-tabs">
      <div class="dtab on"><svg class="dic"><use href="#d-info"/></svg><span>基本属性</span></div>
      <div class="dtab"><svg class="dic"><use href="#d-gear"/></svg><span>边栏设置</span></div>
      <div class="dtab"><svg class="dic"><use href="#d-lock"/></svg><span>锁定条件</span></div>
      <div class="dtab"><svg class="dic"><use href="#d-note"/></svg><span>总表设置</span></div>
      <div class="dtab"><svg class="dic"><use href="#d-tree"/></svg><span>动态流程</span></div>
      <div class="dtab"><svg class="dic"><use href="#d-clip"/></svg><span>附件</span></div>
      <div class="dtab"><svg class="dic"><use href="#d-hands"/></svg><span>协同开发</span></div>
    </div>
    <div class="pane">
      <div class="pane-head">
        <svg class="clip-ic" viewBox="0 0 40 40"><rect x=".5" y=".5" width="39" height="39" fill="#0078d7" stroke="#7a7a7a"/><rect x="9" y="7" width="22" height="28" rx="2.500" fill="#fff"/><rect x="14" y="4.500" width="12" height="5" rx="2" fill="#fff" stroke="#0078d7"/><path d="M13 15h14M13 21h14M13 27h14" stroke="#0078d7" stroke-width="2.400"/></svg>
        <i class="head-line"></i>
      </div>
      <div class="frow g12"><label class="fl">模板编号<em>*</em></label><div class="inp code">KHDA</div><span class="err">模板编号为空, 请检查模板编号</span></div>
      <div class="frow g8"><label class="fl">模板名称<em>*</em></label><div class="inp focus">客户档案</div><span class="err">模板名称为空，请输入模板名称!</span></div>
      <div class="frow g10"><label class="fl">显示标题</label><div class="inp"></div></div>
      <div class="frow g10"><label class="fl">目&emsp;&emsp;录<em>*</em></label><div class="inp">客户档案表<span class="dots">...</span></div><label class="side s1">显示顺序</label><div class="inp num"><span class="blue">0</span><svg class="chev"><use href="#chev"/></svg></div></div>
      <div class="frow g10"><label class="fl">总表视图类型</label><div class="sel-box">标签页<svg class="chev"><use href="#chev"/></svg></div></div>
      <div class="frow g10 chk-row tall16"><span class="box on-chk"><svg viewBox="0 0 14 14"><path d="M2.500 7l3 4 6-9" fill="none" stroke="#666" stroke-width="1.200"/></svg></span><span class="ct">在导航目录树中显示节点</span></div>
      <div class="frow g7"><label class="fl ind">节点名称</label><div class="inp hint">不填时显示模板名称</div></div>
      <div class="frow g5"><label class="fl ind">节点动作</label><div class="sel-box">打开总表<svg class="chev"><use href="#chev"/></svg></div><label class="side s2">目标窗口</label><div class="inp wide hint">不填时默认在新标签页打开</div></div>
      <div class="frow g7 chk-row"><div class="c1"><span class="box"></span><span class="ct">不保存表单到数据库</span></div><div class="c2"><span class="box"></span><span class="ct">只有一份表单</span></div><div class="c3"><span class="box"></span><span class="ct">默认模板</span></div></div>
      <div class="frow g10 top"><div class="c1 sup"><span class="ct">支持</span><div class="sel-box small">仅PC端<svg class="chev"><use href="#chev"/></svg></div></div><div class="c2 mid"><span class="box"></span><span class="ct">只有设计人员才能看到此模板</span></div></div>
      <div class="frow g10 chk-row"><div class="c1 wide-c"><span class="box"></span><span class="ct">有流程时允许删除表单</span></div></div>
    </div>
    <div class="dlg-foot"><button class="btn" type="button">确定</button><button class="btn" type="button">取消</button></div>
  </div>
</section>

<svg class="overlay" viewBox="0 0 1625 897" aria-hidden="true">
  <rect x="8" y="84" width="35" height="26" rx="2" fill="none" stroke="#f5160f" stroke-width="3"/>
  <rect x="970.500" y="427.500" width="205" height="65" rx="2" fill="none" stroke="#f5160f" stroke-width="3"/>
  <polygon points="55,112 875,457 877,453 888,463 869,468 872,464 55,114" fill="#f7200f"/>
</svg>
</body>
</html>
```
FILE: styles.css
```css
* { box-sizing: border-box; }
html, body { margin: 0; padding: 0; }
body {
  position: relative;
  width: 1625px;
  height: 897px;
  overflow: hidden;
  background: #fff;
  color: #111;
  font: 12px/1.2 "Liberation Sans", "Noto Sans CJK SC", sans-serif;
}
i, em { font-style: normal; }
.defs { position: absolute; width: 0; height: 0; }

/* tab strip */
.tabbar { display: flex; height: 27px; border-bottom: 1px solid #cfd9e3; }
.logo { width: 78px; height: 26px; background: #6db33f; color: #fff; display: flex; align-items: center; padding-left: 14px; gap: 4px; font-size: 14px; }
.logo-ic { width: 16px; height: 16px; }
.logo-drop { width: 14px; height: 26px; background: #5f9e37; display: flex; align-items: center; justify-content: center; }
.tab { width: 200px; height: 26px; background: #d6e1ea; border-radius: 6px 6px 0 0; border-left: 1px solid #e6edf3; padding: 2px 4px; overflow: hidden; }
.tab.active { width: 199px; background: #fff; border: 1px solid #cfd9e3; border-bottom: 0; padding: 0 9px 0 8px; display: flex; align-items: center; justify-content: space-between; font-size: 13px; }
.tab-x { width: 9px; height: 9px; }
.newtab { width: 20px; height: 20px; margin: 3px 0 0 5px; background: #ccd9e6; border-radius: 3px; padding: 3px; }
.newtab svg { display: block; width: 14px; height: 14px; }
.blur { display: block; height: 22px; filter: blur(1px); }
.b1 { width: 76px; background: linear-gradient(90deg, #c9d3dd 0 25%, #bcc6d1 25% 50%, #c5cfda 50% 75%, #d2dce6 75%); }
.b2 { width: 58px; margin-left: 4px; background: linear-gradient(90deg, #b4bcc8 0 30%, #c5ced9 30% 60%, #b0b8c3 60% 80%, #cdd7e1 80%); }
.b3 { width: 120px; background: linear-gradient(90deg, #c5ced9 0 20%, #b4bcc8 20% 45%, #c9d2dc 45% 70%, #b9c1cc 70% 85%, #d2dce6 85%); }
.b4 { width: 62px; height: 24px; background: linear-gradient(90deg, #f4f4f4 0 22%, #d8d8da 22% 40%, #e4e4e6 40% 62%, #d3d5d8 62% 80%, #dfe2e5 80%); }

/* address row */
.urlbar { height: 30px; display: flex; align-items: center; }
.nav-ic { width: 16px; height: 16px; flex: none; }
.back { margin-left: 11px; }
.fwd { margin-left: 13px; }
.reload { margin-left: 8px; }
.home { margin-left: 14px; }
.url { margin-left: 13px; padding-top: 2px; font-size: 13px; color: #1b2733; white-space: nowrap; }
.cjk { font-size: 15px; }
.bookmarks { height: 27px; display: flex; align-items: center; padding-left: 8px; gap: 1px; }
.bookmarks span { padding-top: 2px; }

/* toolbars */
.tools { background: #f0f0f0; border-top: 1px solid #aaa; border-bottom: 2px solid #a9a9a9; height: 110px; }
.row { display: flex; align-items: center; height: 27px; white-space: nowrap; }
.r4 { height: 26px; padding-top: 1px; }
.pad5 { padding-left: 5px; }
.t { display: flex; align-items: center; justify-content: center; flex: none; height: 22px; }
.lbl { flex: none; color: #1a1a1a; padding-top: 2px; }
.w2{width:2px}.w3{width:3px}.w4{width:4px}.w5{width:5px}.w6{width:6px}.w7{width:7px}.w8{width:8px}.w9{width:9px}.w10{width:10px}
.w12{width:12px}.w13{width:13px}.w14{width:14px}.w15{width:15px}.w16{width:16px}.w17{width:17px}.w18{width:18px}.w20{width:20px}
.w21{width:21px}.w22{width:22px}.w23{width:23px}.w24{width:24px}.w25{width:25px}.w26{width:26px}.w27{width:27px}.w28{width:28px}
.w32{width:32px}.w33{width:33px}.w34{width:34px}.w35{width:35px}.w36{width:36px}.w49{width:49px}.w53{width:53px}.w82{width:82px}.w144{width:144px}
.ic { width: 16px; height: 16px; flex: none; }
.ic14 { width: 14px; height: 14px; flex: none; }
.ic18 { width: 18px; height: 18px; flex: none; }
.grip { display: block; width: 3px; height: 18px; flex: none; background: repeating-linear-gradient(180deg, #a8a8a8 0 2px, transparent 2px 4px); }
.sl { display: block; width: 1px; height: 22px; flex: none; background: #b5bdc7; }
.sl.tall { height: 25px; }
.caret { display: block; flex: none; width: 0; height: 0; border: 3px solid transparent; border-top: 4px solid #222; border-bottom: 0; }
.caret.off { border-top-color: #bbb; }
.caret.white { border-top-color: #fff; }
.on { background: #a9cbf2; border: 1px solid #8fb6e4; border-radius: 3px; }
.combo { flex: none; height: 19px; background: #fff; border: 1px solid #c6d3e6; border-radius: 3px; display: flex; align-items: center; justify-content: space-between; padding: 0 7px 0 2px; font: 400 10px "Liberation Mono", monospace; color: #000; }
.swatch { display: block; width: 15px; height: 15px; border: 1px solid #999; border-top: 0; background: linear-gradient(#000 0 10px, #f0f0f0 10px); margin-right: -5px; }
.hline { display: block; width: 53px; height: 1px; background: #111; }
.fa b { font: 700 18px "Liberation Serif", serif; color: #1c3f9a; border-bottom: 3px solid #bbb; line-height: 16px; }
.fb b { font: 700 14px "Liberation Serif", serif; color: #111; }
.fi b { font: italic 700 14px "Liberation Serif", serif; color: #222; }
.fu b { font: 700 13px "Liberation Serif", serif; color: #222; text-decoration: underline; }
.sig { font: 700 15px "Liberation Serif", serif; color: #111; }
.fx { font: italic 700 14px "Liberation Serif", serif; color: #111; }
.fx sub { font-size: 9px; line-height: 0; }
.help i { display: flex; align-items: center; justify-content: center; width: 13px; height: 13px; border: 1px solid #52b052; border-radius: 50%; color: #3a9a3a; font-size: 10px; }
.formula { flex: none; width: 956px; height: 20px; background: #fff; border: 1px solid #c6d3e6; border-radius: 3px; }
.actions { display: flex; align-items: center; height: 28px; padding-left: 6px; background: #eee; border-bottom: 1px solid #aaa; white-space: nowrap; }
.actions .lbl { color: #a8a8a8; }

/* sheet */
.sheet { border-collapse: separate; border-spacing: 0; table-layout: fixed; width: 805px; }
.c16 { width: 16px; } .c73 { width: 73px; } .c128 { width: 128px; } .c150 { width: 150px; }
.sheet td { padding: 0; border-right: 1px solid #d9d9d9; border-bottom: 1px solid #d9d9d9; position: relative; line-height: 1; }
.h20 { height: 20px; } .h48 { height: 48px; } .h25 { height: 25px; } .h10 { height: 10px; } .h19 { height: 19px; }
.sheet .title { text-align: center; font-size: 29px; color: #111; line-height: 45px; padding-top: 2px; }
.sheet .lab { background: #f3f3f3; text-align: right; padding: 2px 3px 0 0; white-space: nowrap; }
.sheet .fill { background: #f0f0f0; }
.sheet .fld {
  border-color: #9a9a9a;
  box-shadow: -1px -1px 0 #9a9a9a;
  background-color: #fff;
  background-image:
    linear-gradient(#f00, #f00), linear-gradient(#f00, #f00),
    linear-gradient(#f00, #f00), linear-gradient(#f00, #f00),
    linear-gradient(#f00, #f00), linear-gradient(#f00, #f00),
    linear-gradient(#f00, #f00), linear-gradient(#f00, #f00);
  background-repeat: no-repeat;
  background-size: 6px 2px, 2px 7px, 4px 2px, 2px 7px, 6px 2px, 2px 5px, 4px 2px, 2px 5px;
  background-position: left 1px top 1px, left 1px top 1px, right 1px top 1px, right 1px top 1px, left 1px bottom 1px, left 1px bottom 1px, right 1px bottom 1px, right 1px bottom 1px;
}
.sheet .fld.ro { background-color: #f3f3f3; }
.sheet .sel { box-shadow: -2px -2px 0 #a3a3a3, inset -1px -1px 0 #a3a3a3; border-color: #a3a3a3; }
.handle { position: absolute; right: -3px; bottom: -2px; width: 4px; height: 4px; background: #a3a3a3; }

/* dialog window */
.dialog { position: absolute; left: 835px; top: 277px; width: 753px; height: 563px; background: #6aa9f5; padding: 0 7px 6px 6px; }
.dlg-title { height: 30px; line-height: 31px; text-align: center; color: #fff; font-size: 15px; }
.dlg-close { position: absolute; right: 7px; top: 5px; width: 37px; height: 18px; border: 1px solid #c8202a; border-radius: 2px; background: linear-gradient(#f88 0, #f33 55%, #e8142a 100%); color: #fff; font-weight: 700; font-size: 13px; line-height: 16px; text-align: center; }
.dlg-body { height: 527px; background: #f0f0f0; padding: 2px 2px 0; }
.dlg-tabs { display: flex; height: 63px; }
.dtab { width: 100px; height: 59px; display: flex; flex-direction: column; align-items: center; padding-top: 6px; gap: 3px; color: #111; }
.dtab.on { background: linear-gradient(#aecdf7, #8fb4e3); border: 1px solid #a3bfe0; border-radius: 3px; padding-top: 5px; }
.dic { width: 32px; height: 30px; flex: none; }
.dtab span { line-height: 16px; }
.pane { width: 737px; height: 425px; background: #fff; border: 1px solid #dcdcdc; padding: 12px 0 0 35px; }
.pane-head { display: flex; align-items: center; margin-left: 2px; height: 40px; }
.clip-ic { width: 40px; height: 40px; flex: none; }
.head-line { display: block; width: 403px; height: 1px; background: linear-gradient(90deg, #0078d7, #eee); }
.frow { display: flex; align-items: center; height: 21px; white-space: nowrap; }
.g5 { margin-top: 5px; } .g7 { margin-top: 7px; } .g8 { margin-top: 8px; } .g10 { margin-top: 10px; } .g12 { margin-top: 12px; }
.fl { width: 100px; flex: none; padding-top: 2px; }
.fl em { color: #666; }
.fl.ind { padding-left: 45px; }
.inp { width: 185px; height: 21px; flex: none; border: 1px solid #7a7a7a; padding: 2px 0 0 2px; background: #fff; display: flex; align-items: center; }
.inp.focus { border-color: #0078d7; }
.inp.code { font-size: 10px; }
.inp.hint { color: #8a8a8a; }
.inp.num { width: 56px; justify-content: space-between; padding-right: 4px; }
.blue { color: #1a1ab0; }
.dots { margin: -2px 1px 0 auto; width: 19px; height: 17px; background: #e1e1e1; border: 1px solid #adadad; text-align: center; line-height: 13px; }
.err { margin-left: 15px; color: #f00; padding-top: 2px; }
.side { flex: none; padding-top: 2px; }
.s1 { margin-left: 12px; width: 56px; }
.s2 { margin-left: 14px; width: 54px; }
.sel-box { width: 185px; height: 21px; flex: none; background: #e1e1e1; border: 1px solid #adadad; padding: 2px 4px 0 3px; display: flex; align-items: center; justify-content: space-between; }
.sel-box.small { width: 91px; }
.chev { width: 10px; height: 6px; flex: none; }
.chk-row { height: 14px; }
.chk-row.tall16 { height: 16px; }
.chk-row > .box { margin-right: 2px; }
.ct { padding-top: 2px; }
.box { display: block; flex: none; width: 14px; height: 14px; border: 1px solid #333; background: #fff; }
.box svg { display: block; width: 12px; height: 12px; }
.c1, .c2, .c3 { display: flex; align-items: center; flex: none; gap: 2px; }
.c1 { width: 156px; }
.c2 { width: 158px; }
.sup { gap: 7px; padding-left: 1px; }
.frow.top { align-items: flex-start; }
.mid { margin-top: 2px; }
.dlg-foot { display: flex; justify-content: flex-end; gap: 16px; padding: 9px 9px 0 0; }
.btn { width: 76px; height: 22px; background: #e1e1e1; border: 1px solid #adadad; font: inherit; color: #111; padding: 0; }

.overlay { position: absolute; left: 0; top: 0; width: 1625px; height: 897px; pointer-events: none; }
```
